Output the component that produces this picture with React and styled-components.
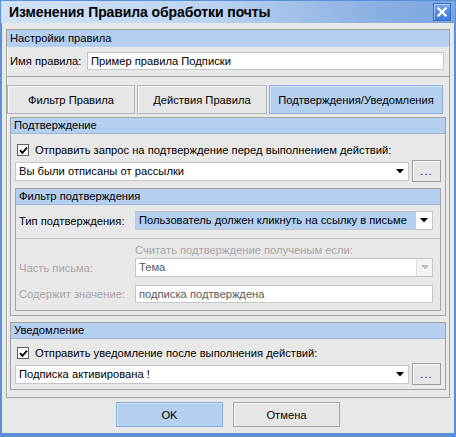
import styled, { createGlobalStyle } from "styled-components";

const Global = createGlobalStyle`
	html, body {
		margin: 0;
		padding: 0;
		background: #e8e8e8;
	}
	* {
		box-sizing: border-box;
	}
`;

const BLUE = "#5b8fd9";
const LINE = "#a3a3a3";
const HEAD = "#b4cff0";

export default function App() {
	return (
		<Window>
			<Global />
			<TitleBar>
				<Title>Изменения Правила обработки почты</Title>
				<CloseButton>
					<svg width="10" height="10" viewBox="0 0 10 10">
						<path d="M1.5 1.5 L8.5 8.5 M8.5 1.5 L1.5 8.5" stroke="#fff" strokeWidth="2.4" strokeLinecap="square" />
					</svg>
				</CloseButton>
			</TitleBar>
			<Body>
				<Group>
					<Header>Настройки правила</Header>
					<NameRow>
						<Label>Имя правила:</Label>
						<TextBox>Пример правила Подписки</TextBox>
					</NameRow>
					<Separator />
					<Tabs>
						<Tab $w={128}>Фильтр Правила</Tab>
						<Tab $w={130}>Действия Правила</Tab>
						<Tab $w={174} $active>Подтверждения/Уведомления</Tab>
					</Tabs>

					<Panel $top={3}>
						<PanelHeader>Подтверждение</PanelHeader>
						<CheckRow $top={10}>
							<CheckBox>
								<CheckMark />
							</CheckBox>
							Отправить запрос на подтверждение перед выполнением действий:
						</CheckRow>
						<ComboRow $top={4}>
							<Combo>
								<ComboText>Вы были отписаны от рассылки</ComboText>
								<Arrow />
							</Combo>
							<DotsButton>...</DotsButton>
						</ComboRow>

						<FilterBox>
							<PanelHeader>Фильтр подтверждения</PanelHeader>
							<FieldRow $top={6}>
								<FieldLabel>Тип подтверждения:</FieldLabel>
								<Combo>
									<ComboText $selected>Пользователь должен кликнуть на ссылку в письме</ComboText>
									<Arrow />
								</Combo>
							</FieldRow>
							<Separator $top={8} $light />
							<Caption>Считать подтверждение полученым если:</Caption>
							<FieldRow $top={1}>
								<FieldLabel $disabled>Часть письма:</FieldLabel>
								<Combo>
									<ComboText $disabled>Тема</ComboText>
									<Arrow $disabled />
								</Combo>
							</FieldRow>
							<FieldRow $top={8}>
								<FieldLabel $disabled>Содержит значение:</FieldLabel>
								<TextBox $disabled>подписка подтверждена</TextBox>
							</FieldRow>
						</FilterBox>
					</Panel>

					<Panel $top={6} $bottom={7}>
						<PanelHeader>Уведомление</PanelHeader>
						<CheckRow $top={8}>
							<CheckBox>
								<CheckMark />
							</CheckBox>
							Отправить уведомление после выполнения действий:
						</CheckRow>
						<ComboRow $top={4} $bottom={4}>
							<Combo>
								<ComboText>Подписка активирована !</ComboText>
								<Arrow />
							</Combo>
							<DotsButton>...</DotsButton>
						</ComboRow>
					</Panel>
				</Group>
				<Buttons>
					<Button $primary>OK</Button>
					<Button>Отмена</Button>
				</Buttons>
			</Body>
		</Window>
	);
}

function CheckMark() {
	return (
		<svg width="9" height="9" viewBox="0 0 9 9">
			<path d="M1 4.2 L3.4 6.8 L8 1.6" stroke="#000" strokeWidth="1.8" fill="none" />
		</svg>
	);
}

function Arrow({ $disabled }) {
	return (
		<ArrowBox $disabled={$disabled}>
			<svg width="8" height="5" viewBox="0 0 8 5">
				<path d="M0 0 H8 L4 4.5 Z" fill={$disabled ? "#b8b8b8" : "#000"} />
			</svg>
		</ArrowBox>
	);
}

const Window = styled.div`
	width: 456px;
	height: 437px;
	display: flex;
	flex-direction: column;
	font-family: "Liberation Sans", Arial, sans-serif;
	font-size: 11.2px;
	color: #000;
`;

const TitleBar = styled.div`
	height: 23px;
	display: flex;
	align-items: center;
	justify-content: space-between;
	padding: 0 4px 0 8px;
	background: linear-gradient(90deg, #d3e3f6 0%, #bcd4f1 45%, #8db2e3 80%, #7aa5de 100%);
	border: 1px solid ${BLUE};
	border-bottom: none;
`;

const Title = styled.div`
	font-weight: bold;
	font-size: 14px;
	letter-spacing: -0.1px;
	color: #000;
`;

const CloseButton = styled.div`
	width: 18px;
	height: 18px;
	display: flex;
	align-items: center;
	justify-content: center;
	background: linear-gradient(180deg, #79aaf0 0%, #4c89e4 55%, #3f7ddb 100%);
	border: 1px solid #3a6fc4;
	box-shadow: inset 1px 1px 0 rgba(255, 255, 255, 0.45);
`;

const Body = styled.div`
	flex: 1;
	display: flex;
	flex-direction: column;
	background: #e8e8e8;
	border: 2px solid ${BLUE};
	border-top: none;
	border-bottom-width: 4px;
	padding: 6px 4px 0 4px;
`;

const Group = styled.div`
	border: 1px solid ${LINE};
	box-shadow: inset 1px 1px 0 #f6f6f6;
	display: flex;
	flex-direction: column;
`;

const Header = styled.div`
	height: 17px;
	line-height: 17px;
	padding-left: 3px;
	background: ${HEAD};
`;

const PanelHeader = styled.div`
	height: 16px;
	line-height: 15px;
	padding-left: 3px;
	background: ${HEAD};
	border-bottom: 1px solid #9fb7d6;
`;

const NameRow = styled.div`
	display: flex;
	align-items: center;
	padding: 5px 5px 0 3px;
`;

const Label = styled.div`
	width: 77px;
	white-space: nowrap;
`;

const TextBox = styled.div`
	flex: 1;
	height: 18px;
	line-height: 16px;
	padding-left: 3px;
	background: #fff;
	border: 1px solid #c6c6c6;
	color: ${(p) => (p.$disabled ? "#5a5a5a" : "#000")};
	white-space: nowrap;
`;

const Separator = styled.div`
	margin-top: ${(p) => p.$top ?? 6}px;
	border-top: 1px solid ${(p) => (p.$light ? "#c4c4c4" : LINE)};
`;

const Tabs = styled.div`
	display: flex;
	gap: 2px;
	margin-top: 8px;
`;

const Tab = styled.div`
	width: ${(p) => p.$w}px;
	height: 29px;
	display: flex;
	align-items: center;
	justify-content: center;
	background: ${(p) => (p.$active ? HEAD : "#e6e6e6")};
	border: 1px solid ${(p) => (p.$active ? "#8eaedb" : "#b4b4b4")};
	box-shadow: inset 1px 1px 0 ${(p) => (p.$active ? "#d6e5f8" : "#fafafa")};
	white-space: nowrap;
`;

const Panel = styled.div`
	margin: ${(p) => p.$top}px 3px ${(p) => p.$bottom ?? 0}px 3px;
	border: 1px solid ${LINE};
	display: flex;
	flex-direction: column;
`;

const CheckRow = styled.div`
	display: flex;
	align-items: center;
	gap: 6px;
	height: 12px;
	margin-top: ${(p) => p.$top}px;
	padding-left: 6px;
	white-space: nowrap;
`;

const CheckBox = styled.div`
	width: 12px;
	height: 12px;
	display: flex;
	align-items: center;
	justify-content: center;
	background: #fff;
	border: 1px solid #5f5f5f;
`;

const ComboRow = styled.div`
	display: flex;
	align-items: center;
	gap: 3px;
	margin: ${(p) => p.$top}px 4px ${(p) => p.$bottom ?? 0}px 4px;
`;

const Combo = styled.div`
	flex: 1;
	height: 19px;
	display: flex;
	align-items: stretch;
	background: #fff;
	border: 1px solid #c6c6c6;
	min-width: 0;
`;

const ComboText = styled.div`
	flex: 1;
	padding-left: 3px;
	line-height: 17px;
	white-space: nowrap;
	overflow: hidden;
	background: ${(p) => (p.$selected ? HEAD : "transparent")};
	color: ${(p) => (p.$disabled ? "#5a5a5a" : "#000")};
`;

const ArrowBox = styled.div`
	width: 16px;
	display: flex;
	align-items: center;
	justify-content: center;
	background: ${(p) => (p.$disabled ? "#f3f3f3" : "#fff")};
	border-left: ${(p) => (p.$disabled ? "1px solid #e0e0e0" : "none")};
`;

const DotsButton = styled.div`
	width: 29px;
	height: 22px;
	display: flex;
	align-items: flex-end;
	justify-content: center;
	padding-bottom: 5px;
	background: #e6e6e6;
	border: 1px solid #9c9c9c;
	box-shadow: inset 1px 1px 0 #fafafa;
	letter-spacing: 1px;
	line-height: 10px;
	color: #202050;
`;

const FilterBox = styled.div`
	margin: 6px 4px 4px 4px;
	border: 1px solid ${LINE};
	display: flex;
	flex-direction: column;
	padding-bottom: 7px;

	${Combo}, ${TextBox} {
		flex: none;
		width: 298px;
	}
`;

const FieldRow = styled.div`
	display: flex;
	align-items: center;
	margin-top: ${(p) => p.$top}px;
	padding-left: 3px;
`;

const FieldLabel = styled.div`
	width: 116px;
	white-space: nowrap;
	color: ${(p) => (p.$disabled ? "#a5a5a5" : "#000")};
`;

const Caption = styled.div`
	margin-top: 5px;
	padding-left: 119px;
	color: #a5a5a5;
	line-height: 13px;
	white-space: nowrap;
`;

const Buttons = styled.div`
	flex: 1;
	display: flex;
	align-items: center;
	justify-content: center;
	gap: 10px;
	padding-bottom: 2px;
`;

const Button = styled.div`
	width: 107px;
	height: 25px;
	display: flex;
	align-items: center;
	justify-content: center;
	background: ${(p) => (p.$primary ? HEAD : "#e6e6e6")};
	border: 1px solid ${(p) => (p.$primary ? "#8eaedb" : "#a8a8a8")};
	box-shadow: inset 1px 1px 0 ${(p) => (p.$primary ? "#d2e2f7" : "#fafafa")};
`;
